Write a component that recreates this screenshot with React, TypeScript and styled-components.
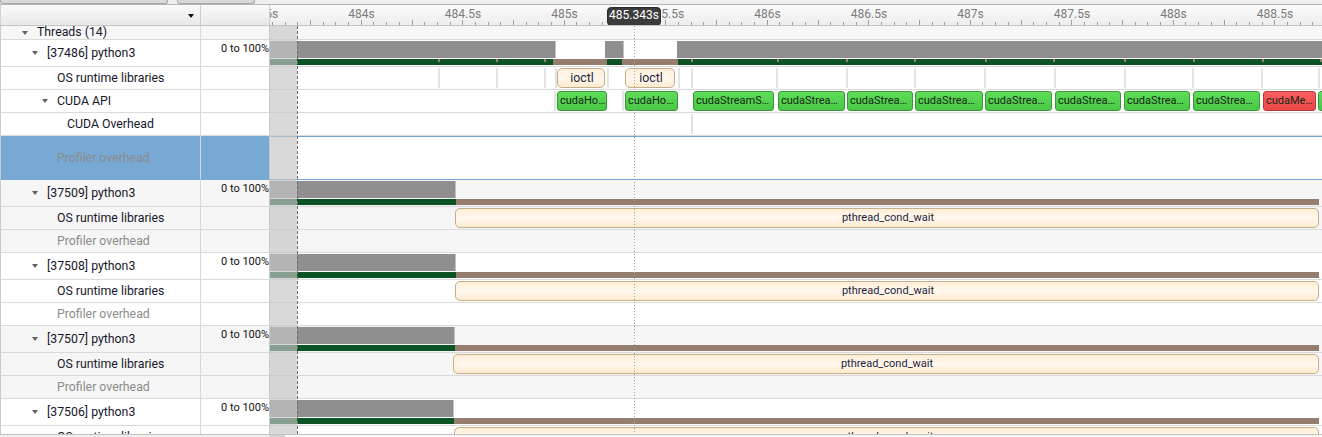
import React from 'react';
import styled, { createGlobalStyle } from 'styled-components';

const GlobalStyle = createGlobalStyle`
  html, body { margin: 0; padding: 0; background: #ffffff; }
  body { font-family: Roboto, "Noto Sans", "Liberation Sans", sans-serif; overflow: hidden; }
  *, *::before, *::after { box-sizing: border-box; }
`;

/* ---------- time axis ---------- */
const ORIGIN = 270; // page x where the timeline starts
const rel = (px: number) => px - ORIGIN;
const TICK_STEP = 12.6875;
const LABEL_STEP = 101.5;

/* ---------- frame ---------- */
const Frame = styled.div`
  width: 1322px;
  height: 437px;
  display: flex;
  flex-direction: column;
  overflow: hidden;
  background: #ffffff;
`;

const TopStrip = styled.div`
  flex: none;
  height: 4px;
  display: flex;
  gap: 9px;
  background: #efefef;
`;

const StripTab = styled.div<{ $w: number }>`
  width: ${p => p.$w}px;
  height: 4px;
  background: #d9d9d9;
  border: 1px solid #a8a8a8;
  border-top: none;
  border-radius: 0 0 3px 3px;
`;

const HeaderRow = styled.div`
  flex: none;
  display: grid;
  grid-template-columns: 201px 69px 1fr;
  height: 22px;
  border-top: 1px solid #b4b4b4;
  border-bottom: 1px solid #c4c4c4;
`;

const HeadCell = styled.div<{ $first?: boolean }>`
  display: flex;
  align-items: center;
  justify-content: flex-end;
  padding-right: 6px;
  background: linear-gradient(#fafafa, #e9e9e9);
  border-right: 1px solid #cfcfcf;
  border-left: ${p => (p.$first ? '1px solid #d2d2d2' : 'none')};
`;

const DropCaret = styled.span`
  width: 0;
  height: 0;
  border-left: 3.5px solid transparent;
  border-right: 3.5px solid transparent;
  border-top: 4px solid #111111;
  margin-top: 2px;
`;

const Ruler = styled.div`
  position: relative;
  overflow: hidden;
  background: linear-gradient(#fcfcfc, #ededed);
`;

const Tick = styled.div<{ $tall: boolean }>`
  position: absolute;
  bottom: 0;
  width: 1px;
  height: ${p => (p.$tall ? 5 : 3)}px;
  background: #9c9c9c;
`;

const RulerLabel = styled.div`
  position: absolute;
  top: 2px;
  transform: translateX(-50%);
  font-size: 12px;
  line-height: 14px;
  color: #7b7b7b;
  white-space: nowrap;
`;

const TimeTip = styled.div`
  position: absolute;
  top: 2px;
  height: 19px;
  width: 54px;
  border-radius: 4px;
  background: #3c3c3c;
  border: 1px solid #2c2c2c;
  color: #ffffff;
  font-size: 12px;
  line-height: 15px;
  text-align: center;
  z-index: 2;
`;

/* ---------- body ---------- */
const Body = styled.div`
  position: relative;
  flex: 1;
  overflow: hidden;
`;

const Row = styled.div<{ $h: number }>`
  display: grid;
  grid-template-columns: 201px 69px 1fr;
  height: ${p => p.$h}px;
`;

const NameCell = styled.div<{ $level: number; $bg: string; $muted?: boolean; $selected?: boolean; $raise?: number }>`
  position: relative;
  display: flex;
  align-items: center;
  padding-left: ${p => 36 + p.$level * 10}px;
  padding-bottom: ${p => (p.$raise ? p.$raise * 2 : 0)}px;
  border-left: 1px solid #cbcbcb;
  border-right: 1px solid #d8d8d8;
  border-bottom: 1px solid ${p => (p.$selected ? '#77a9d4' : '#dadada')};
  background: ${p => (p.$selected ? '#77a9d4' : p.$bg)};
  color: ${p => (p.$muted ? '#8b8b8b' : '#16162a')};
  font-size: 12.3px;
  line-height: 14px;
  white-space: nowrap;
  overflow: hidden;
`;

const Expander = styled.span`
  position: absolute;
  left: var(--caret-x);
  top: calc(50% - 2px);
  width: 0;
  height: 0;
  border-left: 3.5px solid transparent;
  border-right: 3.5px solid transparent;
  border-top: 4px solid #626262;
`;

const ScaleCell = styled.div<{ $bg: string; $selected?: boolean }>`
  display: flex;
  justify-content: flex-end;
  align-items: flex-start;
  padding-top: 2px;
  border-right: 1px solid #c8c8c8;
  border-bottom: 1px solid ${p => (p.$selected ? '#77a9d4' : '#dadada')};
  background: ${p => (p.$selected ? '#77a9d4' : p.$bg)};
  color: #111111;
  font-size: 11px;
  line-height: 13px;
  white-space: nowrap;
`;

const Track = styled.div<{ $bg: string; $selected?: boolean }>`
  position: relative;
  overflow: hidden;
  background: ${p => (p.$selected ? '#ffffff' : p.$bg)};
  border-top: ${p => (p.$selected ? '1px solid #72a6d8' : 'none')};
  border-bottom: 1px solid ${p => (p.$selected ? '#72a6d8' : '#dadada')};
`;

const CpuBar = styled.div`
  position: absolute;
  top: 1px;
  height: 17px;
  background: #8f8f8f;
  box-shadow: inset -1px 0 #c2c2c2;
`;

const StateBar = styled.div<{ $state: 'run' | 'wait' }>`
  position: absolute;
  top: 19px;
  height: 6px;
  background: ${p => (p.$state === 'run' ? '#0b5225' : '#967e6f')};
`;

const Mark = styled.div`
  position: absolute;
  top: 19px;
  width: 2px;
  height: 3px;
  background: #967e6f;
`;

const Guide = styled.div`
  position: absolute;
  top: 1px;
  bottom: 1px;
  width: 2px;
  background: #e4e4e4;
`;

type Tone = 'cream' | 'green' | 'red';

const toneFill: Record<Tone, string> = {
  cream: 'linear-gradient(#ffeed6, #fff8ee 50%, #ffebcf)',
  green: 'linear-gradient(#5fdc5a, #48c844)',
  red: 'linear-gradient(#f96060, #ec4747)',
};
const toneBorder: Record<Tone, string> = {
  cream: '#c6ad8b',
  green: '#3b963b',
  red: '#b43b3b',
};

const EventBox = styled.div<{ $tone: Tone; $size: number }>`
  position: absolute;
  top: 1px;
  height: 20px;
  padding: 0 0 0 2px;
  border: 1px solid ${p => toneBorder[p.$tone]};
  border-radius: ${p => (p.$tone === 'cream' ? 5 : 3)}px;
  background: ${p => toneFill[p.$tone]};
  color: ${p => (p.$tone === 'cream' ? '#1e1e3c' : '#172717')};
  font-size: ${p => p.$size}px;
  line-height: 18px;
  text-align: ${p => (p.$tone === 'cream' ? 'center' : 'left')};
  white-space: nowrap;
  overflow: hidden;
  text-overflow: ellipsis;
`;

const Shade = styled.div`
  position: absolute;
  left: 270px;
  top: 0;
  bottom: 0;
  width: 27px;
  background: rgba(198, 198, 198, 0.67);
  pointer-events: none;
`;

const RangeEdge = styled.div`
  position: absolute;
  left: 297px;
  top: 0;
  bottom: 0;
  width: 1px;
  background: repeating-linear-gradient(to bottom, #6e6e6e 0 3px, transparent 3px 5px);
  pointer-events: none;
`;

const CursorLine = styled.div`
  position: absolute;
  left: 634px;
  top: 0;
  bottom: 0;
  width: 1px;
  background: repeating-linear-gradient(to bottom, #a3a3a3 0 1px, transparent 1px 3px);
  pointer-events: none;
`;

const HScroll = styled.div`
  flex: none;
  height: 3px;
  display: grid;
  grid-template-columns: 270px 15px 1fr;
  border-top: 1px solid #c3c3c3;
`;

const ScrollPart = styled.div<{ $tone: string }>`
  background: ${p => p.$tone};
`;

/* ---------- data ---------- */
type Item =
  | { kind: 'cpu'; l: number; r: number }
  | { kind: 'state'; state: 'run' | 'wait'; l: number; r: number }
  | { kind: 'mark'; x: number }
  | { kind: 'guide'; x: number }
  | { kind: 'box'; tone: Tone; l: number; r: number; text?: string; size?: number };

type RowDef = {
  name: string;
  level: number;
  expander?: boolean;
  muted?: boolean;
  scale?: string;
  h: number;
  bg: string;
  selected?: boolean;
  raise?: number;
  items: Item[];
};

const WHITE = '#ffffff';
const GREY = '#f6f6f6';
const END = 1319;

const threadItems = (end: number): Item[] => [
  { kind: 'cpu', l: 260, r: end },
  { kind: 'state', state: 'run', l: 260, r: end },
  { kind: 'state', state: 'wait', l: end, r: END },
];

const firstThread: Item[] = [
  { kind: 'cpu', l: 260, r: 556 },
  { kind: 'cpu', l: 605, r: 624 },
  { kind: 'cpu', l: 677, r: 1330 },
  { kind: 'state', state: 'run', l: 260, r: 553 },
  { kind: 'state', state: 'wait', l: 553, r: 607 },
  { kind: 'state', state: 'run', l: 607, r: 622 },
  { kind: 'state', state: 'wait', l: 622, r: 678 },
  { kind: 'state', state: 'run', l: 678, r: 1330 },
  ...[438, 496, 544, 691, 777, 846, 914, 985, 1053, 1124, 1193, 1262, 1320].map(
    x => ({ kind: 'mark', x } as Item),
  ),
];

const osGuides = [438, 496, 544, 555, 607, 678, 691, 776, 846, 914, 984, 1054, 1124, 1192, 1261, 1318];

const cudaCalls: [number, number, string, Tone][] = [
  [557, 607, 'cudaHostAlloc', 'green'],
  [625, 678, 'cudaHostAlloc', 'green'],
  [693, 774, 'cudaStreamSynchronize', 'green'],
  [778, 845, 'cudaStreamSynchronize', 'green'],
  [847, 913, 'cudaStreamSynchronize', 'green'],
  [915, 983, 'cudaStreamSynchronize', 'green'],
  [985, 1052, 'cudaStreamSynchronize', 'green'],
  [1055, 1121, 'cudaStreamSynchronize', 'green'],
  [1124, 1190, 'cudaStreamSynchronize', 'green'],
  [1193, 1260, 'cudaStreamSynchronize', 'green'],
  [1263, 1316, 'cudaMemcpyAsync', 'red'],
  [1318, 1330, '', 'green'],
];

const threadGroup = (tid: number, bg: string, end: number, boxL: number): RowDef[] => [
  { name: `[${tid}] python3`, level: 1, expander: true, scale: '0 to 100%', h: 27, bg, items: threadItems(end) },
  {
    name: 'OS runtime libraries',
    level: 2,
    h: 23,
    bg,
    items: [{ kind: 'box', tone: 'cream', l: boxL, r: END, text: 'pthread_cond_wait', size: 11 }],
  },
  { name: 'Profiler overhead', level: 2, muted: true, h: 23, bg, items: [] },
];

const rows: RowDef[] = [
  { name: 'Threads (14)', level: 0, expander: true, h: 14, bg: '#f7f7f7', raise: 1, items: [] },
  { name: '[37486] python3', level: 1, expander: true, scale: '0 to 100%', h: 27, bg: WHITE, items: firstThread },
  {
    name: 'OS runtime libraries',
    level: 2,
    h: 23,
    bg: WHITE,
    items: [
      ...osGuides.map(x => ({ kind: 'guide', x } as Item)),
      { kind: 'box', tone: 'cream', l: 557, r: 605, text: 'ioctl', size: 12.3 },
      { kind: 'box', tone: 'cream', l: 625, r: 675, text: 'ioctl', size: 12.3 },
    ],
  },
  {
    name: 'CUDA API',
    level: 2,
    expander: true,
    h: 23,
    bg: WHITE,
    items: [
      { kind: 'guide', x: 554 },
      { kind: 'guide', x: 622 },
      ...cudaCalls.map(([l, r, text, tone]) => ({ kind: 'box', tone, l, r, text, size: 11 } as Item)),
    ],
  },
  { name: 'CUDA Overhead', level: 3, h: 23, bg: WHITE, items: [{ kind: 'guide', x: 691 }] },
  { name: 'Profiler overhead', level: 2, muted: true, h: 44, bg: WHITE, selected: true, items: [] },
  ...threadGroup(37509, GREY, 456, 455),
  ...threadGroup(37508, WHITE, 456, 455),
  ...threadGroup(37507, GREY, 455, 453),
  ...threadGroup(37506, WHITE, 454, 454),
];

const renderItem = (it: Item, i: number) => {
  switch (it.kind) {
    case 'cpu':
      return <CpuBar key={i} style={{ left: rel(it.l), width: it.r - it.l }} />;
    case 'state':
      return <StateBar key={i} $state={it.state} style={{ left: rel(it.l), width: it.r - it.l }} />;
    case 'mark':
      return <Mark key={i} style={{ left: rel(it.x) }} />;
    case 'guide':
      return <Guide key={i} style={{ left: rel(it.x) }} />;
    case 'box':
      return (
        <EventBox key={i} $tone={it.tone} $size={it.size ?? 11} style={{ left: rel(it.l), width: it.r - it.l }}>
          {it.text}
        </EventBox>
      );
    default:
      return null;
  }
};

const ticks = Array.from({ length: 90 }, (_, k) => k - 4).map(i => ({
  x: 40 + i * TICK_STEP,
  tall: i % 4 === 0,
}));

const labels = Array.from({ length: 11 }, (_, k) => {
  const t = 483.5 + 0.5 * k;
  return { x: -10 + LABEL_STEP * k, text: `${Number.isInteger(t) ? t.toFixed(0) : t.toFixed(1)}s` };
});

export default function App() {
  return (
    <>
      <GlobalStyle />
      <Frame>
        <TopStrip>
          <StripTab $w={168} />
          <StripTab $w={78} />
        </TopStrip>
        <HeaderRow>
          <HeadCell $first>
            <DropCaret />
          </HeadCell>
          <HeadCell />
          <Ruler>
            {ticks.map((t, i) => (
              <Tick key={i} $tall={t.tall} style={{ left: t.x }} />
            ))}
            {labels.map((l, i) => (
              <RulerLabel key={i} style={{ left: l.x }}>
                {l.text}
              </RulerLabel>
            ))}
            <TimeTip style={{ left: rel(607) }}>485.343s</TimeTip>
          </Ruler>
        </HeaderRow>
        <Body>
          {rows.map((r, i) => (
            <Row key={i} $h={r.h}>
              <NameCell
                $level={r.level}
                $bg={r.bg}
                $muted={r.muted}
                $selected={r.selected}
                $raise={r.raise}
                style={{ ['--caret-x' as string]: `${22 + r.level * 10 - 1}px` }}
              >
                {r.expander && <Expander />}
                {r.name}
              </NameCell>
              <ScaleCell $bg={r.bg} $selected={r.selected}>
                {r.scale}
              </ScaleCell>
              <Track $bg={r.bg} $selected={r.selected}>
                {r.items.map(renderItem)}
              </Track>
            </Row>
          ))}
          <Shade />
          <RangeEdge />
          <CursorLine />
        </Body>
        <HScroll>
          <ScrollPart $tone="#efefef" />
          <ScrollPart $tone="#d2d2d2" />
          <ScrollPart $tone="#f8f8f8" />
        </HScroll>
      </Frame>
    </>
  );
}
